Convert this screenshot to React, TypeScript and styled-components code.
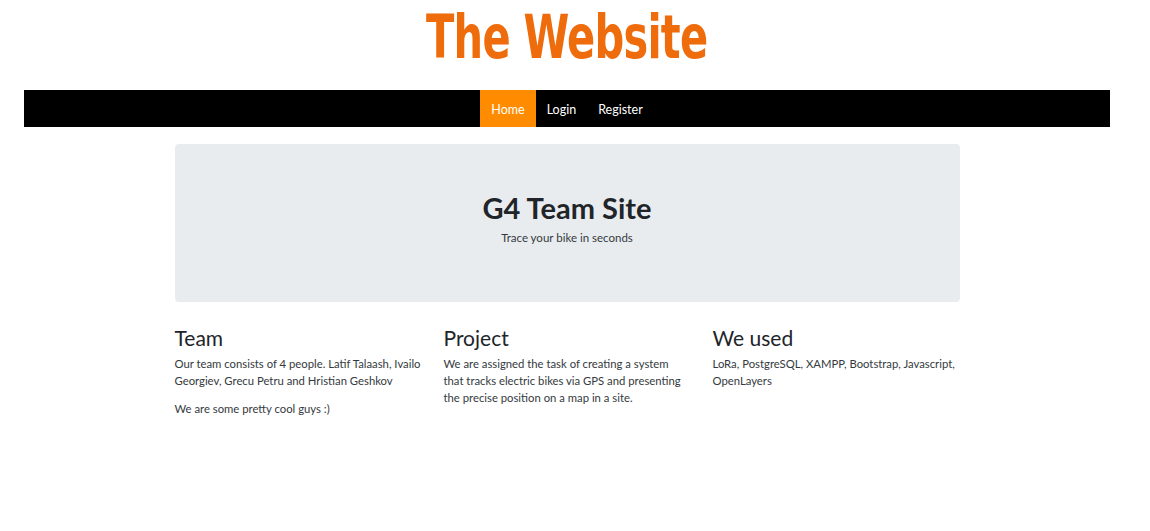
import React from "react";
import styled, { createGlobalStyle } from "styled-components";

const Global = createGlobalStyle`
  html, body { margin: 0; padding: 0; background: #fff; }
  body { font-family: Lato, "Open Sans", sans-serif; color: #212529; }
  * { box-sizing: border-box; }
`;

const Page = styled.div`
  width: 1086px;
  margin-left: 24px;
`;

const Title = styled.h1`
  margin: 0;
  height: 90px;
  display: flex;
  align-items: center;
  justify-content: center;
  padding-bottom: 17px;
`;

const TitleText = styled.span`
  display: inline-block;
  font-family: "DejaVu Sans Condensed", sans-serif;
  font-weight: 700;
  font-size: 60px;
  line-height: 60px;
  color: #ef6c0c;
  letter-spacing: -1px;
  transform: scaleX(0.77);
`;

const NavBar = styled.nav`
  height: 37px;
  background: #000;
  display: flex;
  justify-content: center;
`;

const NavItem = styled.a<{ $active?: boolean }>`
  display: flex;
  align-items: center;
  padding: 0 11px;
  padding-top: 1px;
  font-size: 12.5px;
  color: #fff;
  text-decoration: none;
  background: ${(p) => (p.$active ? "#ff8c00" : "transparent")};
`;

const Container = styled.div`
  width: 785px;
  margin: 17px auto 0;
`;

const Jumbotron = styled.div`
  background: #e9ecef;
  border-radius: 4px;
  height: 158px;
  display: flex;
  flex-direction: column;
  align-items: center;
  padding-top: 46px;
`;

const JumboTitle = styled.h2`
  margin: 0 0 3px;
  font-size: 29px;
  font-weight: 700;
  line-height: 36px;
`;

const Lead = styled.p`
  margin: 0;
  font-size: 11.5px;
  line-height: 18px;
  color: #343a40;
`;

const Columns = styled.div`
  display: grid;
  grid-template-columns: repeat(3, 247px);
  column-gap: 22px;
  margin-top: 23px;
`;

const Col = styled.div``;

const ColTitle = styled.h3`
  margin: 0 0 4px;
  font-size: 21px;
  font-weight: 400;
  line-height: 26px;
`;

const Text = styled.p`
  margin: 0 0 11px;
  font-size: 11.3px;
  line-height: 17px;
  color: #343a40;
`;

export default function App() {
  return (
    <>
      <Global />
      <Page>
        <Title>
          <TitleText>The Website</TitleText>
        </Title>
        <NavBar>
          <NavItem $active href="#">Home</NavItem>
          <NavItem href="#">Login</NavItem>
          <NavItem href="#">Register</NavItem>
        </NavBar>
        <Container>
          <Jumbotron>
            <JumboTitle>G4 Team Site</JumboTitle>
            <Lead>Trace your bike in seconds</Lead>
          </Jumbotron>
          <Columns>
            <Col>
              <ColTitle>Team</ColTitle>
              <Text>Our team consists of 4 people. Latif Talaash, Ivailo Georgiev, Grecu Petru and Hristian Geshkov</Text>
              <Text>We are some pretty cool guys :)</Text>
            </Col>
            <Col>
              <ColTitle>Project</ColTitle>
              <Text>We are assigned the task of creating a system that tracks electric bikes via GPS and presenting the precise position on a map in a site.</Text>
            </Col>
            <Col>
              <ColTitle>We used</ColTitle>
              <Text>LoRa, PostgreSQL, XAMPP, Bootstrap, Javascript, OpenLayers</Text>
            </Col>
          </Columns>
        </Container>
      </Page>
    </>
  );
}
